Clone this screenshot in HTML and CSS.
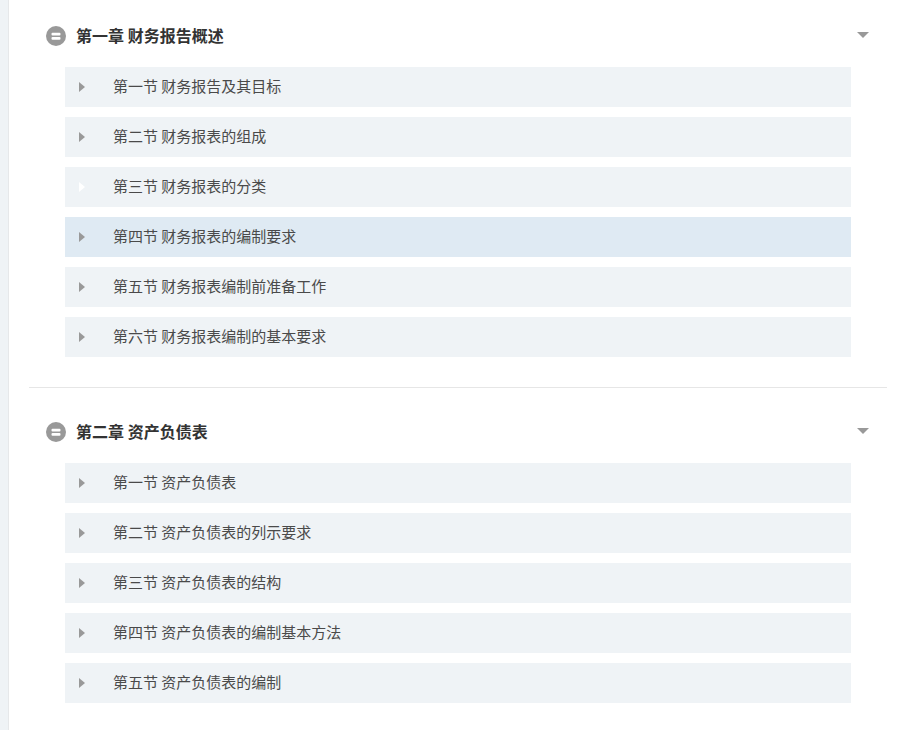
FILE: index.html
```html
<!DOCTYPE html>
<html lang="zh-CN">
<head>
    <meta charset="UTF-8">
    <title>财务报告</title>
    <link rel="stylesheet" href="styles.css">
</head>
<body>
    <div class="strip"></div>
    <div class="content">
        <div class="chapter">
            <div class="chapter-head">
                <svg class="badge" width="20" height="20" viewBox="0 0 20 20"><circle cx="10" cy="10" r="10" fill="#999"/><rect x="5.5" y="6.8" width="9" height="2.7" rx="1" fill="#fff"/><rect x="5.5" y="11" width="9" height="2.7" rx="1" fill="#fff"/></svg>
                <h2>第一章 财务报告概述</h2>
                <span class="caret"></span>
            </div>
            <ul class="sections">
                <li><span class="arrow"></span><span class="label">第一节 财务报告及其目标</span></li>
                <li><span class="arrow"></span><span class="label">第二节 财务报表的组成</span></li>
                <li class="hover"><span class="arrow"></span><span class="label">第三节 财务报表的分类</span></li>
                <li class="active"><span class="arrow"></span><span class="label">第四节 财务报表的编制要求</span></li>
                <li><span class="arrow"></span><span class="label">第五节 财务报表编制前准备工作</span></li>
                <li><span class="arrow"></span><span class="label">第六节 财务报表编制的基本要求</span></li>
            </ul>
        </div>
        <div class="chapter">
            <div class="chapter-head">
                <svg class="badge" width="20" height="20" viewBox="0 0 20 20"><circle cx="10" cy="10" r="10" fill="#999"/><rect x="5.5" y="6.8" width="9" height="2.7" rx="1" fill="#fff"/><rect x="5.5" y="11" width="9" height="2.7" rx="1" fill="#fff"/></svg>
                <h2>第二章 资产负债表</h2>
                <span class="caret"></span>
            </div>
            <ul class="sections">
                <li><span class="arrow"></span><span class="label">第一节 资产负债表</span></li>
                <li><span class="arrow"></span><span class="label">第二节 资产负债表的列示要求</span></li>
                <li><span class="arrow"></span><span class="label">第三节 资产负债表的结构</span></li>
                <li><span class="arrow"></span><span class="label">第四节 资产负债表的编制基本方法</span></li>
                <li><span class="arrow"></span><span class="label">第五节 资产负债表的编制</span></li>
            </ul>
        </div>
    </div>
</body>
</html>
```

FILE: styles.css
```css
html, body { height: 100%; }
body { margin: 0; display: flex; background: #fff; overflow: hidden; font-family: "Noto Sans CJK SC", "Liberation Sans", sans-serif; color: #4a4a4a; }
.strip { width: 8px; flex: none; background: #eff3f6; border-right: 1px solid #e6e8ea; }
.content { flex: none; width: 858px; margin-left: 20px; }
.chapter { padding: 29px 0 30px; border-bottom: 1px solid #e6e6e6; }
.chapter:first-child { padding-top: 21px; }
.chapter:last-child { border-bottom: none; }
.chapter-head { display: flex; align-items: center; height: 30px; margin-bottom: 16px; padding-left: 17px; }
.chapter-head h2 { margin: 0 0 2px 10px; font-size: 16px; line-height: 30px; font-weight: 700; color: #333; flex: 1; }
.badge { display: block; flex: none; }
.caret { width: 0; height: 0; margin: 0 18px 2px 0; border-left: 6px solid transparent; border-right: 6px solid transparent; border-top: 6px solid #999; }
.sections { list-style: none; margin: 0 0 0 36px; padding: 0; width: 786px; }
.sections li { display: flex; align-items: center; height: 40px; margin-bottom: 10px; padding-left: 14px; box-sizing: border-box; background: #eff3f6; font-size: 15px; }
.sections li:last-child { margin-bottom: 0; }
.sections li.active { background: #dfeaf3; }
.label { margin-bottom: 4px; }
.arrow { width: 0; height: 0; margin-right: 28px; border-top: 5.5px solid transparent; border-bottom: 5.5px solid transparent; border-left: 6px solid #999; }
.hover .arrow { border-left-color: #fff; }
```
